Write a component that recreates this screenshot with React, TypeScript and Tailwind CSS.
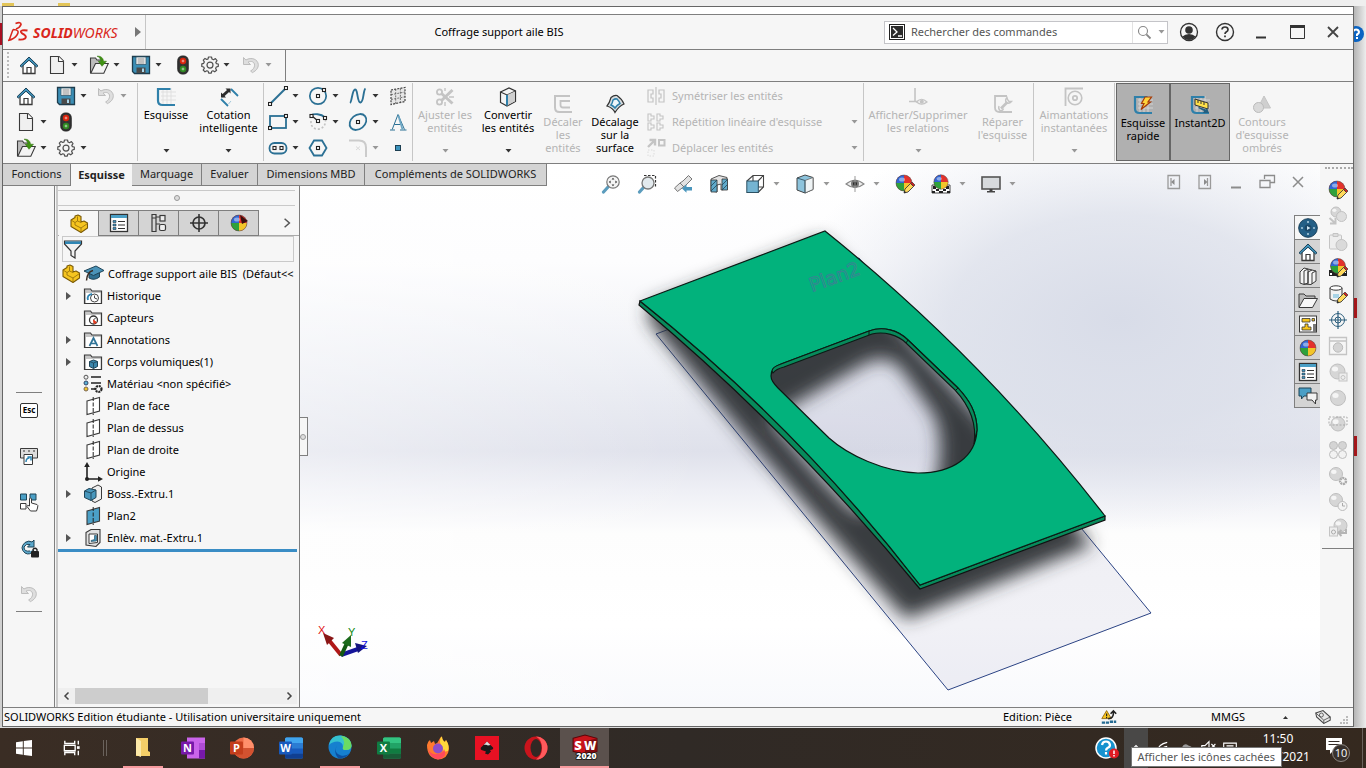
import { ReactNode } from "react";

type G = { children?: ReactNode; s?: number; v?: string };

/* ---------- drawing helpers ---------- */
function Svg({ children, s = 20, v = "0 0 20 20" }: G) {
  return (
    <svg width={s} height={s} viewBox={v} fill="none" aria-hidden="true" className="shrink-0">
      {children}
    </svg>
  );
}

const INK = "#3a3a3a";
const BLUE = "#2b7094";
const PALE = "#c4c4c4";

function Caret({ off = false }: { off?: boolean }) {
  return (
    <svg width="7" height="4" viewBox="0 0 7 4" aria-hidden="true" className="shrink-0">
      <path d="M0.5 0H6.5L3.5 3.6z" fill={off ? "#979797" : "#333"} />
    </svg>
  );
}

const Home = () => (
  <Svg>
    <path d="M4 9V18.5H16V9L10 4z" fill="#fff" stroke={INK} strokeWidth="1.3" />
    <path d="M8 18.5V12.5H12V18.5" stroke={INK} strokeWidth="1.2" />
    <path d="M1 10.8L10 2L19 10.8L17.6 12L10 5.2L2.4 12z" fill="#3f93bb" stroke="#1d4258" strokeWidth="1" />
  </Svg>
);
const Doc = () => (
  <Svg>
    <path d="M3.5 1.5H12L16.5 6V18.5H3.5z" fill="#f0f0f0" stroke={INK} strokeWidth="1.1" />
    <path d="M11.5 1.5V6.5H16.5" fill="#fff" stroke={INK} strokeWidth="1.1" />
  </Svg>
);
const Open = () => (
  <Svg>
    <path d="M1.5 18V3H6.5L8 5H13.5V9" fill="#bcbcbc" stroke={INK} strokeWidth="1.1" />
    <path d="M1.8 18.3L6.5 8.5H19.3L14.8 18.3z" fill="#f4f4f4" stroke={INK} strokeWidth="1.1" />
    <path d="M8 1.2C12 .8 14.4 3 14.4 6.2H17.5L13 11.3L9.3 6.2H11.8C11.8 3.6 10.5 2.2 8 1.2z" fill="#3f9212" stroke="#2f6f0c" strokeWidth=".5" />
  </Svg>
);
const Save = () => (
  <Svg>
    <path d="M1.5 1.5H18.5V18.5H3.5L1.5 16.5z" fill="#3b8eb5" stroke="#1f3c4c" strokeWidth="1.3" />
    <path d="M5 2H15V9.5H5z" fill="#fff" stroke="#33586b" strokeWidth=".8" />
    <path d="M6.5 4H13.5M6.5 6H13.5M6.5 8H13.5" stroke="#777" strokeWidth=".9" />
    <path d="M5.5 12.5H14.5V18H5.5z" fill="#4a4a4a" />
    <path d="M11 13.5H13V17H11z" fill="#a9d7ec" />
  </Svg>
);
const Light = () => (
  <Svg>
    <rect x="4.8" y="1" width="10.4" height="18" rx="4.5" fill="#333" stroke="#222" />
    <circle cx="10" cy="6" r="3.2" fill="#d9240c" />
    <circle cx="10" cy="14" r="3.2" fill="#2f8a22" />
    <path d="M10 4.6V7.4M8.6 6H11.4M10 12.6V15.4M8.6 14H11.4" stroke="#fff" strokeOpacity=".7" strokeWidth=".8" />
  </Svg>
);
const Gear = () => (
  <Svg>
    <path
      d="M8.5 2H11.5L12 4L13.6 4.7L15.4 3.6L17 5.6L15.8 7.3L16.4 8.7L18.3 9V11.4L16.3 12L15.6 13.4L16.6 15.2L14.7 16.8L13 15.8L11.7 16.3L11.3 18.2H8.7L8.2 16.3L6.8 15.8L5 16.8L3.2 15L4.3 13.3L3.7 12L1.8 11.5V8.8L3.7 8.3L4.3 6.9L3.3 5.2L5 3.4L6.8 4.5L8 4z"
      fill="#f5f5f5" stroke="#505050" strokeWidth="1.2" strokeLinejoin="round"
    />
    <circle cx="10" cy="10.1" r="3" stroke="#505050" strokeWidth="1.2" />
  </Svg>
);
const Undo = () => (
  <Svg>
    <path d="M2.5 2.5V9.5H9.5L7 7.2C10.5 5.4 13.5 7 13.6 10.2C13.6 12.6 12 14.6 9.6 16L11.4 17.6C15.2 15.8 17.4 13 17.3 9.6C17 4.4 10.5 1.6 4.9 5z" fill="#dedede" stroke="#bdbdbd" strokeWidth="1" />
  </Svg>
);

const SketchI = ({ children }: { children?: ReactNode }) => (
  <Svg>
    <path d="M5 5H20M5 9H20M5 13H20M7 1V17M11 1V17M15 1V17" stroke="#dcdcdc" strokeWidth=".8" />
    <path d="M14.5 2H2V13.5Q2 18 6.5 18H19" stroke="#2f80aa" strokeWidth="2.2" />
    {children}
  </Svg>
);
const Dim = () => (
  <Svg>
    <path d="M12 2L19 9M2 12L9 19" stroke="#2f80aa" strokeWidth="1.8" />
    <path d="M3.5 10.5L12 2.5M9.5 17L12 14" stroke="#8cbbd2" strokeWidth=".8" />
    <path d="M2 10.5V5.5L3.6 7L8 3L6.500 1.500H11.500V6.500L10 5L5.600 9L7 10.500z" fill="#2c2c2c" />
  </Svg>
);
const Node = ({ x, y }: { x: number; y: number }) => (
  <rect x={x - 1.5} y={y - 1.5} width="3" height="3" fill="#fff" stroke="#222" strokeWidth="1.1" />
);
const LineI = () => (<Svg><path d="M2 18L18 2" stroke={BLUE} strokeWidth="2" /><Node x={2} y={18} /><Node x={18} y={2} /></Svg>);
const CircleI = () => (<Svg><circle cx="10" cy="10" r="8.2" stroke={BLUE} strokeWidth="1.7" /><Node x={10} y={10} /><Node x={16} y={4} /></Svg>);
const SplineI = () => (<Svg><path d="M2 17C4 16 4 4 7 3.5C10 3 9 17 12.5 16.5C16 16 15 4 17.5 2.5" stroke={BLUE} strokeWidth="1.9" /></Svg>);
const PlaneGrid = () => (
  <Svg>
    <path d="M3 4L17 1.5V15.5L3 18.5z" fill="#e6e6e6" stroke="#444" strokeWidth="1.2" strokeDasharray="2 1.2" />
    <path d="M7.7 3V18M12.4 2.4V16.8M3 8.7L17 6M3 13.5L17 10.8" stroke="#555" strokeWidth=".8" strokeDasharray="2 1.2" />
  </Svg>
);
const RectI = () => (<Svg><rect x="2" y="4" width="16" height="12" stroke={BLUE} strokeWidth="1.8" /><Node x={2} y={16} /><Node x={18} y={4} /></Svg>);
const ArcI = () => (
  <Svg>
    <path d="M2.5 3.5C6 1.5 13 1.5 17 5.5" stroke={BLUE} strokeWidth="1.8" />
    <path d="M3 9C2 20 18 20 17.5 8" stroke="#c2c2c2" strokeWidth="1.6" strokeDasharray="2 2" />
    <path d="M4 4L10 9" stroke="#222" strokeWidth="1.2" /><Node x={3.5} y={4} /><Node x={10} y={9} /><Node x={17} y={6} />
  </Svg>
);
const EllipseI = () => (<Svg><ellipse cx="10" cy="10" rx="9.2" ry="7" transform="rotate(-40 10 10)" stroke={BLUE} strokeWidth="1.8" /><Node x={10} y={10} /></Svg>);
const LetterA = () => (
  <Svg>
    <path d="M2 18H7M12 18H18.5M4.2 17.5L10 2.5L16.5 17.5M6.3 12.5H12.5" stroke={BLUE} strokeWidth="1" />
    <path d="M10.4 3.5L14.500 17.5" stroke="#6da7c4" strokeWidth="1.8" />
  </Svg>
);
const SlotI = () => (<Svg><rect x="1.5" y="5" width="17" height="10.5" rx="5" stroke={BLUE} strokeWidth="1.8" /><Node x={6.5} y={10} /><Node x={13.5} y={10} /></Svg>);
const HexI = () => (<Svg><path d="M6 2.5H14L18.5 10L14 17.5H6L1.5 10z" stroke={BLUE} strokeWidth="1.8" /><Node x={10} y={10} /></Svg>);
const FilletI = () => (<Svg><path d="M1 2.5H11Q18 2.5 18 9.5V19" stroke="#cbcbcb" strokeWidth="2" /><path d="M8 8.5L12 12M12 8.5L8 12" stroke="#dadada" /></Svg>);
const PointI = () => (<Svg><rect x="7.5" y="7.5" width="5" height="5" fill="#3b93bd" stroke="#1d3f52" /></Svg>);

const Trim = () => (
  <Svg>
    <circle cx="4.500" cy="5" r="2.6" stroke={PALE} strokeWidth="1.8" /><circle cx="4.500" cy="15" r="2.6" stroke={PALE} strokeWidth="1.8" />
    <path d="M6.500 6.5L17.500 16.500M6.500 13.5L17.500 3" stroke={PALE} strokeWidth="3" /><path d="M10 1V4M10 15V19M14 10H19" stroke={PALE} strokeWidth="1.4" />
  </Svg>
);
const Cube = () => (
  <Svg>
    <path d="M2.5 5L11 1L17.5 4V14.5L9 19L2.5 15.5z" fill="#f4f4f4" stroke="#333" strokeWidth="1.2" />
    <path d="M2.5 5L9 8L17.5 4" stroke="#333" strokeWidth="1.1" /><path d="M9 8L17 4.4V14.3L9 18.4z" fill="#cfcfcf" />
    <path d="M9 8V18.5" stroke="#2f80aa" strokeWidth="2" />
  </Svg>
);
const OffsetI = () => (<Svg><path d="M17 2H2V13.5Q2 18 6.5 18H19" stroke={PALE} strokeWidth="2" /><path d="M17 7H7.5V11Q7.5 13.5 10 13.5H17" stroke={PALE} strokeWidth="1.8" /></Svg>);
const SurfI = () => (
  <Svg>
    <path d="M6 3.5Q9 1 12 1.5Q17 5 19 10Q14 12 10 18.5Q8 14 2 12Q4.5 9 6 3.5z" fill="#d7dde0" stroke="#333" strokeWidth="1.2" />
    <path d="M8 6Q10 4.5 12 5Q14 7 15 9.5Q12 11 10 14Q8.5 12 6 11Q7.5 9 8 6z" fill="#eef6fa" stroke="#2f80aa" strokeWidth="1.5" />
  </Svg>
);
const Mirror = () => (<Svg><path d="M10 1V19" stroke={PALE} strokeWidth="1.2" /><path d="M2 4H7V8H5V12H7V16H2zM18 4H13V8H15V12H13V16H18z" stroke={PALE} strokeWidth="1.2" /></Svg>);
const Pattern = () => (
  <Svg>
    {[[2, 2], [11, 2], [2, 11], [11, 11]].map(([x, y]) => (
      <path key={`${x}-${y}`} d={`M${x} ${y}H${x + 3}V${y + 2}H${x + 6}V${y + 5}H${x + 3}V${y + 7}H${x}z`} stroke={PALE} strokeWidth="1.1" />
    ))}
  </Svg>
);
const MoveI = () => (
  <Svg>
    <path d="M2 9L8 3M3.5 2H9V7.5" stroke={PALE} strokeWidth="2.4" /><rect x="13" y="2" width="5.5" height="5.5" stroke={PALE} strokeWidth="2" />
    <rect x="2" y="12" width="6" height="6" stroke="#dcdcdc" strokeDasharray="1.5 1.5" />
  </Svg>
);
const RelI = () => (
  <Svg>
    <path d="M7 1V14M1 14.5H13" stroke={PALE} strokeWidth="1.6" />
    <path d="M8.5 15Q13.5 9.5 19 15Q13.5 19.5 8.5 15z" fill="#f1f1f1" stroke={PALE} strokeWidth="1.2" /><circle cx="13.8" cy="14.7" r="2" fill={PALE} />
  </Svg>
);
const RepairI = () => (
  <Svg>
    <path d="M14 2H2V13.5Q2 18 6.5 18H19" stroke={PALE} strokeWidth="1.8" />
    <path d="M8 14.500L14.500 8" stroke={PALE} strokeWidth="2.600" /><path d="M14 3.500Q11.500 6 13.500 9Q16.500 10 18.500 7.500L16 7.500L14.500 5.5zM6 12Q5 15 7 16.500Q10 17 10.500 14.500" stroke={PALE} strokeWidth="1.4" />
  </Svg>
);
const SnapI = () => (<Svg><path d="M1.5 19V1.5H19" stroke={PALE} strokeWidth="1.8" /><circle cx="11" cy="11" r="6.8" stroke={PALE} strokeWidth="1.6" /><circle cx="11" cy="11" r="2.2" stroke={PALE} strokeWidth="1.8" /></Svg>);
const Rapid = () => (<SketchI><path d="M12 2H18.5L15 7H17.5L8 14.5L11 8.5H8.5z" fill="#ffd43b" stroke="#a53a08" strokeWidth="1.2" /></SketchI>);
const Instant = () => (
  <SketchI>
    <path d="M5 4L18 8V14L5 10z" fill="#ffe14a" stroke="#333" /><path d="M8 5V8M11 6V9M14 7V10" stroke="#333" />
    <path d="M8 13L14 16L13 18H19L17 13L16 14.5L9 12z" fill="#235f80" />
  </SketchI>
);
const Shaded = () => (<Svg><path d="M12 2L18.5 14H6z" fill="#cfcfcf" stroke={PALE} /><circle cx="6.5" cy="13.5" r="5" fill="#d9d9d9" stroke="#bbb" /></Svg>);

/* four-colour appearance ball */
const Ball = ({ children, r = 8, cx = 9, cy = 9 }: { children?: ReactNode; r?: number; cx?: number; cy?: number }) => (
  <Svg>
    <circle cx={cx} cy={cy} r={r} fill="#e3322c" />
    <path d={`M${cx} ${cy}V${cy - r}A${r} ${r} 0 0 0 ${cx - r} ${cy}z`} fill="#3166d4" />
    <path d={`M${cx} ${cy}H${cx - r}A${r} ${r} 0 0 0 ${cx} ${cy + r}z`} fill="#2fa13c" />
    <path d={`M${cx} ${cy}V${cy + r}A${r} ${r} 0 0 0 ${cx + r} ${cy}z`} fill="#f2c52a" />
    <circle cx={cx} cy={cy} r={r} stroke="#444" strokeOpacity=".6" strokeWidth=".8" />
    <ellipse cx={cx - 2} cy={cy - 3.5} rx="3" ry="2" fill="#fff" fillOpacity=".45" />
    {children}
  </Svg>
);
const Pencil = () => (
  <>
    <path d="M9 19L10 15L15.5 9.5L18.5 12.5L13 18z" fill="#ffd95a" stroke="#3b3b3b" strokeWidth=".9" />
    <path d="M15.5 9.5L17 8L20 11L18.5 12.5z" fill="#c22" stroke="#3b3b3b" strokeWidth=".7" /><path d="M9 19L9.6 16.8L11.2 18.4z" fill="#222" />
  </>
);
const Checker = () => (
  <><path d="M1 11H19V19H1z" fill="#fff" stroke="#222" strokeWidth=".8" /><path d="M2 12H5V15H2zM15 12H18V15H15zM5 15H8V17H5zM12 15H15V17H12zM1 17H4V19H1zM8 17H12V19H8zM16 17H19V19H16z" fill="#222" /></>
);
const Ghost = ({ children, r = 7.5, cx = 9.5, cy = 9.5 }: { children?: ReactNode; r?: number; cx?: number; cy?: number }) => (
  <Svg>
    <circle cx={cx} cy={cy} r={r} fill="#d6d6d6" stroke="#bfbfbf" />
    <ellipse cx={cx - r / 3} cy={cy - r / 3} rx={r / 2.4} ry={r / 3} fill="#f5f5f5" />
    {children}
  </Svg>
);

/* heads-up view tools */
const ZoomFit = () => (
  <Svg><path d="M2.5 18L7.5 12.5" stroke="#5b9cbd" strokeWidth="3.2" strokeLinecap="round" /><circle cx="12" cy="8" r="6.2" fill="#f4f4f4" stroke="#777" strokeWidth="1.2" />
    <path d="M12 3.8L13.4 5.6H10.600zM12 12.2L13.400 10.400H10.600zM7.800 8L9.600 6.600V9.400zM16.200 8L14.400 6.600V9.400z" fill="#333" /></Svg>
);
const ZoomArea = () => (
  <Svg><path d="M7 1.5H18.5V13" stroke="#333" strokeWidth="1.2" strokeDasharray="2.5 1.5" /><path d="M2.5 18L6.5 13.5" stroke="#5b9cbd" strokeWidth="3.2" strokeLinecap="round" /><circle cx="11" cy="9" r="6" fill="#e3eaee" stroke="#777" strokeWidth="1.3" /></Svg>
);
const Prev = () => (
  <Svg><path d="M1.5 14L7 9L10 7L15.500 1.500L19 5L13 11L4.500 17.5z" fill="#e2e2e2" stroke="#777" /><path d="M7 9L11 13" stroke="#777" /><path d="M9 14.5L13.5 10.5V13H19V16.5H13.5V18.8z" fill="#4a96bd" /></Svg>
);
const Section = () => (
  <Svg><path d="M2 5L10 1.5L18 3.5V15L12 16V10L8 11V18L2 17z" fill="#e2e2e2" stroke="#555" /><path d="M2 6H8V18H2zM13 5H18.5V16H13z" fill="#60aacb" stroke="#333" strokeWidth=".8" /><path d="M2 12L8 6M2 17L8 11M13 11L18 6M13 16L18 11" stroke="#245" strokeWidth=".8" /></Svg>
);
const ViewCube = () => (
  <Svg><path d="M2 7L8 1.5H18.5V13L13 18.5M18.5 1.5L13 7M8 1.5V13H18.5M13 7V13" stroke="#444" strokeWidth="1.1" /><rect x="1.8" y="7" width="11.5" height="11.5" fill="#74b4d2" stroke="#2c5163" /></Svg>
);
const Display = () => (
  <Svg><path d="M2 4L10 1L18 3.5V15.5L10 19L2 16z" fill="#8cc3dc" stroke="#444" /><path d="M10 6.5L18 3.5V15.5L10 19z" fill="#eef3f5" stroke="#666" strokeWidth=".8" /><path d="M2 4L10 6.5V19" stroke="#356" strokeWidth=".9" /></Svg>
);
const Eye = () => (
  <Svg><path d="M1 10Q10 2.5 19 10Q10 17 1 10z" fill="#eee" stroke="#888" strokeWidth="1.1" /><circle cx="10" cy="9.8" r="4" fill="#777" /><circle cx="10" cy="9.8" r="2" fill="#222" /><path d="M10 2V18" stroke="#999" /></Svg>
);
const Monitor = () => (<Svg><rect x="1" y="3" width="18" height="12" fill="#d7dadd" stroke="#555" strokeWidth="1.6" /><path d="M8.5 15H11.5V17H14V18.5H6V17H8.5z" fill="#444" /></Svg>);

/* tree and panels */
const Part = () => (
  <Svg>
    <path d="M2 6L6 3.5V2L9 1L12 2.5V8L15 7L18.5 9V14L12 18.5L2 12.5z" fill="#f6c51f" stroke="#7a5a06" strokeWidth="1.1" strokeLinejoin="round" />
    <path d="M2 6L6 8.5V11L12 14L18.5 9.5M12 14V18.5M6 8.5L8.5 7V2.5M8.5 7L12 8.5" stroke="#9b750c" strokeWidth=".9" />
  </Svg>
);
const Cap = () => (
  <Svg><path d="M5 9V14Q10 17 15.5 13V9z" fill="#2f6f90" stroke="#1f4457" /><path d="M0 7L12 2L20 6.5L9.5 11.5z" fill="#4b93b8" stroke="#1f4457" /><path d="M9 6.5Q3 8 2.5 16.5" stroke="#3b2b22" strokeWidth="1.5" /></Svg>
);
const PropI = () => (
  <Svg><rect x="1.5" y="1.5" width="17" height="17" fill="#fff" stroke="#333" strokeWidth="1.3" /><path d="M2 2H18V5H2z" fill="#4a9fc6" />
    <path d="M4 7.5H7V9.5H4zM4 11H7V13H4zM4 14.5H7V16.5H4z" fill="#3f93bb" stroke="#234" strokeWidth=".6" /><path d="M9 8.5H16M9 12H16M9 15.5H16" stroke="#333" strokeWidth="1.1" /></Svg>
);
const ConfI = () => (<Svg><path d="M3 1.5H7V5H3zM3 5V18.500H7V13M7 5V13M7 11H11M7 4H11" stroke={INK} strokeWidth="1.2" /><rect x="11" y="2.500" width="5" height="5.5" fill="#eee" stroke={INK} strokeWidth="1.2" /><rect x="10.5" y="11.500" width="6" height="6" rx="1.5" fill="#eee" stroke={INK} strokeWidth="1.2" /></Svg>);
const TargetI = () => (<Svg><circle cx="10" cy="10" r="6" stroke="#333" strokeWidth="1.7" /><path d="M10 1V19M1 10H19" stroke="#333" strokeWidth="1.6" /></Svg>);
const Funnel = () => (<Svg><path d="M1.5 2H18.5V5L12 12V19L8 16.5V12L1.5 5z" fill="#f1f1f1" stroke="#333" strokeWidth="1.2" /><path d="M2 2.4H18V5H2z" fill="#2f86b4" /></Svg>);
const FolderBox = ({ children }: { children?: ReactNode }) => (
  <Svg><path d="M1.5 17.5V3H7.5L9 5H18.5V17.5z" fill="#c6c6c6" stroke={INK} strokeWidth="1.2" /><path d="M3 7H17.5V17H3z" fill="#fff" />{children}</Svg>
);
const History = () => (<FolderBox><circle cx="11.5" cy="12" r="4" stroke="#444" fill="#fff" /><path d="M11.5 9.5V12L14 13" stroke="#444" /><path d="M5 14Q3.5 9 9 8" stroke="#2f86b4" strokeWidth="1.8" /></FolderBox>);
const Sensor = () => (<FolderBox><circle cx="10.5" cy="12" r="4" stroke="#333" fill="#fff" strokeWidth="1.3" /><path d="M10.5 12L13 9.5" stroke="#333" /><path d="M10.5 12L13.5 14.5L11 15.5z" fill="#e03a1e" stroke="#e03a1e" /></FolderBox>);
const Annot = () => (<FolderBox><path d="M6.5 16L10.5 8L14.5 16M8 13.5H13" stroke="#2f7397" strokeWidth="1.7" /></FolderBox>);
const Bodies = () => (<FolderBox><path d="M6.5 9.5L10.5 8L14.5 9.5V14.5L10.5 16.5L6.5 14.5z" fill="#3b86ab" stroke="#1f4457" /><path d="M6.5 9.5L10.5 11V16.5M10.5 11L14.5 9.5" stroke="#1f4457" strokeWidth=".8" /></FolderBox>);
const Material = () => (
  <Svg><path d="M8 3H18M8 9H18M8 15H13" stroke="#222" strokeWidth="1.6" /><circle cx="3" cy="3.2" r="2" fill="#eee" stroke="#555" /><circle cx="3" cy="9" r="2" fill="#5ab0d6" stroke="#346" /><circle cx="3" cy="15" r="2" fill="#f2c52a" stroke="#765" /><circle cx="15.5" cy="15" r="3" stroke="#222" strokeWidth="2.2" strokeDasharray="2 .8" /></Svg>
);
const PlaneI = ({ fill = "#fff" }: { fill?: string }) => (<Svg><path d="M4 5L16.5 1.5V15L4 18.5z" fill={fill} stroke={INK} strokeWidth="1.1" /><path d="M10.2 1V19" stroke="#222" strokeDasharray="4 1.5" /></Svg>);
const Origin = () => (<Svg><path d="M4 17V3M3 17H17" stroke="#222" strokeWidth="1.6" /><path d="M4 0L6.8 5H1.2zM20 17L15 14.2V19.8z" fill="#222" /><circle cx="4" cy="17" r="2" fill="#222" /></Svg>);
const Boss = () => (<Svg><path d="M9 4L15 1L18.5 3V15L12 18.5L9 17z" fill="#eee" stroke={INK} /><path d="M1.5 7L6 4.5L13 6V13.5L8 16.5L1.5 13.5z" fill="#4797bd" stroke="#1f4457" /><path d="M1.5 7L8 9V16.5M8 9L13 6" stroke="#1f4457" strokeWidth=".9" /></Svg>);
const CutI = () => (<Svg><path d="M3 4.5L8 1.5H17V14.5L13 18.5L3 17z" fill="#e2e2e2" stroke={INK} strokeWidth="1.1" /><path d="M6 6H14.500V14.500L6 15.5z" fill="#fff" stroke={INK} /><path d="M8 13.500V12.500L11.500 11.500V7.500H13.500V13z" fill="#3f93bb" stroke="#1f4457" strokeWidth=".6" /></Svg>);

/* ---------- reusable controls ---------- */
function Tool({ label, children, cls = "w-7", caret, off, cc = "w-3" }: { label: string; children: ReactNode; cls?: string; caret?: boolean; off?: boolean; cc?: string }) {
  return (
    <div className="flex items-center">
      <button aria-label={label} className={`flex h-[26px] items-center justify-center ${cls}`}>{children}</button>
      {caret && (
        <button aria-label={`${label}, options`} className={`flex h-[26px] items-center ${cc}`}><Caret off={off} /></button>
      )}
    </div>
  );
}

function Big({ icon, lines, w, off, caret, low, hot }: { icon: ReactNode; lines: string[]; w: string; off?: boolean; caret?: boolean; low?: boolean; hot?: boolean }) {
  return (
    <button className={`flex h-[78px] flex-col items-center ${w} ${low ? "pt-[11px]" : "pt-1"} ${off ? "text-[#b4b4b4]" : "text-black"} ${hot ? "border border-[#666] bg-[#b0b0b0]" : ""}`}>
      {icon}
      <span className="flex flex-col pt-px whitespace-nowrap">
        {lines.map((l) => <span key={l}>{l}</span>)}
      </span>
      {caret && <span className="mt-auto flex pb-2"><Caret off={off} /></span>}
    </button>
  );
}

const Rule = () => <div className="h-[78px] w-px shrink-0 bg-[#c6c6c6]" />;

/* ---------- title bar ---------- */
function TitleBar() {
  return (
    <header className="flex h-[34px] items-center bg-[#f6f6f6]">
      <div className="flex h-full w-[143px] items-center border-r border-[#c6c6c6] pl-1">
        <svg width="22" height="22" viewBox="0 0 22 22" fill="none" className="shrink-0" aria-hidden="true">
          <path d="M8.500 2.500Q14 .500 14 3.500Q13 6.500 9 8" stroke="#d9261c" strokeWidth="1.700" />
          <path d="M6 8.500L2 19.500M6 8.500Q13.500 8.500 10 14Q7.500 18 1 19.500" stroke="#d9261c" strokeWidth="1.500" />
          <path d="M20.500 9.500Q13.500 8.500 14 11Q14.500 12.500 17 13.500Q20 15.500 18 17.500Q16 19 11.500 18.500" stroke="#d9261c" strokeWidth="2" />
        </svg>
        <div className="pl-1 font-['Noto_Sans','Open_Sans',sans-serif] text-[14px] text-[#d9261c] italic"><b>SOLID</b>WORKS</div>
        <button aria-label="Menu" className="ml-auto pr-1">
          <svg width="6" height="10" viewBox="0 0 6 10"><path d="M0 0L6 5L0 10z" fill="#777" /></svg>
        </button>
      </div>
      <h1 className="min-w-0 flex-1 truncate pr-12 pl-4 text-center">Coffrage support aile BIS</h1>
      <div className="flex h-[23px] w-[284px] items-center border border-[#c4c4c8] bg-white">
        <svg width="16" height="16" viewBox="0 0 16 16" className="mx-1 shrink-0" aria-hidden="true">
          <rect x=".5" y=".5" width="15" height="15" fill="#fff" stroke="#222" /><rect x="2" y="2" width="12" height="12" fill="#2c2c2c" /><path d="M4 4L8 8L4 11.500M9 12H13" stroke="#fff" strokeWidth="1.3" fill="none" />
        </svg>
        <input aria-label="Rechercher des commandes" placeholder="Rechercher des commandes" className="min-w-0 flex-1 bg-transparent pl-0.5 placeholder:text-[#555] focus:outline-none" />
        <button aria-label="Rechercher" className="flex h-full w-6 items-center justify-center border-l border-[#e2e2e2]">
          <Svg s={15}><circle cx="8" cy="8" r="6" stroke="#888" strokeWidth="1.5" /><path d="M12.5 12.5L18 18" stroke="#888" strokeWidth="2.4" /></Svg>
        </button>
        <span className="flex w-[11px] justify-center"><Caret off /></span>
      </div>
      <div className="flex shrink-0 items-center">
        <button aria-label="Compte" className="flex w-[42px] justify-center">
          <Svg><circle cx="10" cy="10" r="8.5" stroke="#333" strokeWidth="1.3" /><circle cx="10" cy="8" r="3.8" fill="#333" /><path d="M3.5 14.5Q6 12 10 12T16.5 14.5Q14 18 10 18T3.5 14.5z" fill="#333" /></Svg>
        </button>
        <button aria-label="Aide" className="flex w-[30px] justify-center">
          <Svg><circle cx="10" cy="10" r="8.5" stroke="#333" strokeWidth="1.4" /><path d="M7 7.5Q7.2 5 10 5T13 7.5Q13 9 11.5 9.8Q10 10.6 10 12M10 13.5V15.2" stroke="#333" strokeWidth="1.7" /></Svg>
        </button>
        <button aria-label="Réduire" className="flex w-[42px] justify-center"><Svg><path d="M5 15.5H15" stroke="#333" strokeWidth="2" /></Svg></button>
        <button aria-label="Agrandir" className="flex w-[31px] justify-center"><Svg><path d="M2.500 3.500H16.500V16.500H2.500z" stroke="#333" /><path d="M2 4.5H17" stroke="#333" strokeWidth="3" /></Svg></button>
        <button aria-label="Fermer" className="flex w-10 justify-center"><Svg><path d="M5 5L15 15M15 5L5 15" stroke="#444" strokeWidth="1.8" /></Svg></button>
      </div>
    </header>
  );
}

function QuickBar() {
  return (
    <div className="flex h-8 border-t border-[#7f7f7f] bg-[#f6f6f6]">
      <div className="flex items-center border-r border-[#7f7f7f] pr-1.5 pb-px">
        <div className="mr-1.5 ml-1 h-[26px] w-px border-l-2 border-dotted border-[#bbb]" />
        <Tool label="Accueil"><Home /></Tool>
        <Tool label="Nouveau" caret cc="w-3.5"><Doc /></Tool>
        <Tool label="Ouvrir" caret cc="w-3.5"><Open /></Tool>
        <Tool label="Enregistrer" caret cc="w-3.5"><Save /></Tool>
        <Tool label="Reconstruire"><Light /></Tool>
        <Tool label="Options" cls="w-[26px]" caret cc="w-3.5"><Gear /></Tool>
        <Tool label="Annuler" caret off cc="w-3.5"><Undo /></Tool>
      </div>
    </div>
  );
}

function Ribbon() {
  return (
    <div className="flex h-[83px] items-start border-y border-[#7f7f7f] bg-[#f6f6f6] pt-px leading-[13px]">
      <div className="grid w-[134px] shrink-0 grid-cols-[40px_40px_40px] pl-[9px]">
        <Tool label="Accueil"><Home /></Tool><Tool label="Enregistrer" caret><Save /></Tool><Tool label="Annuler" caret off><Undo /></Tool>
        <Tool label="Nouveau" caret><Doc /></Tool><Tool label="Reconstruire"><Light /></Tool><span />
        <Tool label="Ouvrir" caret><Open /></Tool><Tool label="Options" caret><Gear /></Tool>
      </div>
      <Rule />
      <Big icon={<SketchI />} lines={["Esquisse"]} w="w-14" caret />
      <Big icon={<Dim />} lines={["Cotation", "intelligente"]} w="w-[69px]" caret />
      <Rule />
      <div className="grid w-[148px] shrink-0 grid-cols-[40px_40px_40px_28px]">
        <Tool label="Ligne" caret><LineI /></Tool><Tool label="Cercle" caret><CircleI /></Tool><Tool label="Spline" caret><SplineI /></Tool><Tool label="Plan"><PlaneGrid /></Tool>
        <Tool label="Rectangle" caret><RectI /></Tool><Tool label="Arc" caret><ArcI /></Tool><Tool label="Ellipse" caret><EllipseI /></Tool><Tool label="Texte"><LetterA /></Tool>
        <Tool label="Rainure" caret><SlotI /></Tool><Tool label="Polygone"><HexI /></Tool><Tool label="Congé" caret off><FilletI /></Tool><Tool label="Point"><PointI /></Tool>
      </div>
      <Rule />
      <Big icon={<Trim />} lines={["Ajuster les", "entités"]} w="w-16" off caret />
      <Big icon={<Cube />} lines={["Convertir", "les entités"]} w="w-[62px]" caret />
      <Big icon={<OffsetI />} lines={["Décaler", "les", "entités"]} w="w-12" off low />
      <Big icon={<SurfI />} lines={["Décalage", "sur la", "surface"]} w="w-14" low />
      <div className="flex w-[220px] shrink-0 flex-col text-[#b4b4b4]">
        {[
          { t: "Symétriser les entités", i: <Mirror />, c: false },
          { t: "Répétition linéaire d'esquisse", i: <Pattern />, c: true },
          { t: "Déplacer les entités", i: <MoveI />, c: true },
        ].map((r) => (
          <button key={r.t} className="flex h-[26px] items-center pr-[5px] pl-[3px]">
            {r.i}<span className="pb-px pl-1.5">{r.t}</span>{r.c && <span className="ml-auto"><Caret off /></span>}
          </button>
        ))}
      </div>
      <Rule />
      <Big icon={<RelI />} lines={["Afficher/Supprimer", "les relations"]} w="w-[108px]" off caret />
      <Big icon={<RepairI />} lines={["Réparer", "l'esquisse"]} w="w-[61px]" off low />
      <Rule />
      <Big icon={<SnapI />} lines={["Aimantations", "instantanées"]} w="w-20" off caret />
      <Rule />
      <div className="flex pl-px">
        <Big icon={<Rapid />} lines={["Esquisse", "rapide"]} w="w-[54px]" low hot />
        <Big icon={<Instant />} lines={["Instant2D"]} w="w-[60px]" low hot />
      </div>
      <Big icon={<Shaded />} lines={["Contours", "d'esquisse", "ombrés"]} w="w-16" off low />
    </div>
  );
}

function Tabs() {
  const tabs = [
    ["Fonctions", "w-[68px]"], ["Esquisse", "w-[61px]"], ["Marquage", "w-[70px]"],
    ["Evaluer", "w-[56px]"], ["Dimensions MBD", "w-[107px]"], ["Compléments de SOLIDWORKS", "w-[182px]"],
  ];
  return (
    <nav className="absolute top-0 left-0 z-10 flex">
      {tabs.map(([t, w], i) => (
        <button key={t} className={`h-[22px] whitespace-nowrap text-[#222] ${w} ${i === 1 ? "bg-[#f6f6f6] font-bold" : "border-r border-b border-[#7f7f7f] bg-[#d4d4d4]"}`}>{t}</button>
      ))}
    </nav>
  );
}

/* ---------- left side ---------- */
function SideKeys() {
  return (
    <aside className="flex w-[52px] shrink-0 flex-col items-center border-r border-[#7f7f7f] bg-[#f6f6f6] pt-[228px] pl-px">
      <div className="h-px w-[26px] bg-[#7f7f7f]" />
      <div className="flex flex-col items-center gap-[26px] py-[7px]">
        <button className="flex h-5 w-5 items-center justify-center"><span className="flex h-[15px] w-[18px] items-center justify-center rounded-[2px] border border-[#333] bg-white text-[8px] font-bold">Esc</span></button>
        <button aria-label="Raccourcis"><Svg><path d="M1.5 2.5H18.5V12H1.5z" fill="#ddd" stroke={INK} /><path d="M4 5H6M9 5H11M14 5H16" stroke="#888" strokeWidth="2" /><path d="M5 8.5H13.5V18.5H5z" fill="#fff" stroke={INK} /><path d="M7 16Q7 12 10.5 12M8.5 11H12V14.5" stroke="#2f86b4" strokeWidth="1.5" /></Svg></button>
        <button aria-label="Sélection"><Svg><path d="M1.5 2H7.5V8H1.5zM11 2H17V8H11z" fill="#4a9fc6" stroke="#1f4457" /><path d="M1.5 11.5H7V17H1.5z" fill="#fff" stroke={INK} /><path d="M10.5 6.5Q12 5 12.5 7V11L18 12.5Q19.5 13 18.5 16L17.5 19H11.5L8 14.5Q8 12.5 10.5 14z" fill="#fff" stroke={INK} /></Svg></button>
        <button aria-label="Verrouiller"><Svg><path d="M15 12Q11 18 6 15Q0 10 6 4.5Q10 2 13 4L15 2V9H8.5L11 6.5Q7 5 5 9Q5 14 11 13" fill="#5ba8cc" stroke="#1f4457" /><rect x="12" y="13" width="8" height="6.5" rx="1" fill="#222" /><path d="M14 13V11.5Q16 9 18 11.5V13" stroke="#222" strokeWidth="1.3" /></Svg></button>
        <button aria-label="Annuler"><Undo /></button>
      </div>
      <div className="h-px w-[26px] bg-[#7f7f7f]" />
    </aside>
  );
}

function Tree() {
  const rows: { t: string; i: ReactNode; a?: boolean }[] = [
    { t: "Historique", i: <History />, a: true }, { t: "Capteurs", i: <Sensor /> },
    { t: "Annotations", i: <Annot />, a: true }, { t: "Corps volumiques(1)", i: <Bodies />, a: true },
    { t: "Matériau <non spécifié>", i: <Material /> }, { t: "Plan de face", i: <PlaneI /> },
    { t: "Plan de dessus", i: <PlaneI /> }, { t: "Plan de droite", i: <PlaneI /> },
    { t: "Origine", i: <Origin /> }, { t: "Boss.-Extru.1", i: <Boss />, a: true },
    { t: "Plan2", i: <PlaneI fill="#4ba0c7" /> }, { t: "Enlèv. mat.-Extru.1", i: <CutI />, a: true },
  ];
  const tabs = [<Part />, <PropI />, <ConfI />, <TargetI />, <Ball cx={10} cy={10}><path d="M11 2L19 8L13 11z" fill="#3a1010" /></Ball>];
  return (
    <section className="flex w-[243px] shrink-0 flex-col border-l-2 border-[#c9c9c9] bg-[#f6f6f6] pt-[22px]">
      <div className="mt-1 mr-1 flex h-4 items-center justify-center border-y border-[#c9c9c9]">
        <span className="h-1.5 w-1.5 rounded-full border border-[#999] bg-[#ddd]" />
      </div>
      <div className="mt-1 flex h-[26px] border-b border-[#aaa] pl-px">
        {tabs.map((t, i) => (
          <button key={i} aria-label={`Onglet ${i + 1}`} className={`flex h-[26px] w-10 items-center justify-center border-t border-r border-[#7f7f7f] ${i ? "border-b bg-[#d4d4d4]" : "bg-[#f6f6f6]"}`}>{t}</button>
        ))}
        <button aria-label="Suite" className="ml-auto pr-1.5"><Svg s={12}><path d="M6 3L14 10L6 17" stroke="#555" strokeWidth="2.5" /></Svg></button>
      </div>
      <label className="mr-[5px] ml-1 flex h-[26px] items-center border border-[#c9c9c9]">
        <Funnel /><input aria-label="Filtre" className="min-w-0 flex-1 bg-transparent px-1 focus:outline-none" />
      </label>
      <div className="mt-px flex h-[22px] items-center pl-[3px] whitespace-nowrap">
        <Part /><span className="w-[3px] shrink-0" /><Cap /><span className="pl-1 whitespace-pre">Coffrage support aile BIS  (Défaut&lt;&lt;</span>
      </div>
      <ul>
        {rows.map((r) => (
          <li key={r.t} className="flex h-[22px] items-center whitespace-nowrap">
            <span className="flex w-[25px] pl-2">{r.a && <svg width="5" height="8" viewBox="0 0 5 8"><path d="M0 0L5 4L0 8z" fill="#555" /></svg>}</span>
            {r.i}<span className="pl-1">{r.t}</span>
          </li>
        ))}
      </ul>
      <div className="mr-0.5 h-[3px] bg-[#3a8dc5]" />
      <div className="mt-auto mr-0.5 mb-[3px] flex h-4 items-center bg-[#efefef]">
        <button aria-label="Gauche" className="flex w-[17px] justify-center"><Svg s={10}><path d="M13 3L6 10L13 17" stroke="#444" strokeWidth="3" /></Svg></button>
        <div className="flex h-4 flex-1"><div className="w-[65%] bg-[#cdcdcd]" /></div>
        <button aria-label="Droite" className="flex w-[17px] justify-center"><Svg s={10}><path d="M7 3L14 10L7 17" stroke="#444" strokeWidth="3" /></Svg></button>
      </div>
    </section>
  );
}

/* ---------- 3D view ---------- */
const HOLE = "M771 376C771 370 774 367 781 364L869 331C883 326 898 330 908 340L958 388C969 400 977 412 977 430C976 456 954 473 918 473C884 472 848 455 829 438L778 388C773 383 771 380 771 376z";

function Scene() {
  return (
    <svg className="block h-full w-full" viewBox="300 164 1020 543" preserveAspectRatio="xMidYMid slice" aria-label="Vue 3D" role="img">
      <defs>
        <linearGradient id="sky" x1="0" y1="0" x2="0" y2="1">
          <stop offset="0" stopColor="#fff" /><stop offset=".18" stopColor="#fdfdfe" /><stop offset=".38" stopColor="#eceef4" /><stop offset=".53" stopColor="#dfe1eb" />
          <stop offset=".6" stopColor="#eeeff5" /><stop offset=".68" stopColor="#fdfdfd" /><stop offset=".85" stopColor="#fff" /><stop offset="1" stopColor="#f8f9fc" />
        </linearGradient>
        <linearGradient id="veil" x1="0" y1="0" x2="1" y2="0">
          <stop offset="0" stopColor="#fff" stopOpacity=".4" /><stop offset=".4" stopColor="#fff" stopOpacity="0" />
        </linearGradient>
        <radialGradient id="glow" gradientUnits="userSpaceOnUse" cx="0" cy="0" r="1" gradientTransform="translate(1120 320) scale(340 210)">
          <stop offset="0" stopColor="#d8dce8" /><stop offset=".5" stopColor="#dadee9" stopOpacity=".75" /><stop offset="1" stopColor="#e4e7ef" stopOpacity="0" />
        </radialGradient>
        <filter id="soft" x="-20%" y="-20%" width="140%" height="140%"><feGaussianBlur stdDeviation="9" /></filter>
      </defs>
      <rect x="300" y="164" width="1020" height="543" fill="url(#sky)" />
      <rect x="300" y="164" width="1020" height="543" fill="url(#veil)" />
      <rect x="300" y="164" width="1020" height="543" fill="url(#glow)" />
      <path d="M656 334L859 258L1151 613L948 690z" fill="#b0b3cc" fillOpacity=".18" stroke="#2b4384" strokeWidth="1" />
      <path
        d="M648 306L822 239L1092 545L906 619Q780 480 650 322zM770 418L868 362Q890 354 902 370L934 415Q948 450 930 500L856 512Q820 480 770 418z"
        fill="#303136" fillRule="evenodd" fillOpacity=".95" filter="url(#soft)"
      />
      <path d="M640 301Q797 426 920 585L1105 516V520L920 589Q790 431 639 305z" fill="#078a5b" stroke="#111" strokeWidth="1.2" />
      <path d={`M640 301L825 231Q982 357 1105 516L920 585Q797 426 640 301z${HOLE}`} fill="#02b27c" fillRule="evenodd" stroke="#0c1a14" strokeWidth="1.2" />
      <path d="M772 371C772 368 775 366 781 364L869 331C883 326 898 330 908 340L958 388C969 400 977 412 977 430L974 444C977 424 969 405 955 390L906 343C898 335 884 331 872 334L784 367Q776 369 773 373z" fill="#078a5b" stroke="#0c1a14" strokeWidth="1.1" />
      <path d="M869 331V335M908 340L906 343M958 388L955 391" stroke="#0c1a14" strokeWidth="1" />
      <text x="812" y="292" transform="rotate(-20 812 292)" fontFamily="DejaVu Sans, sans-serif" fontSize="19" fill="#02b27c" stroke="#3f7f96" strokeWidth=".8">Plan2</text>
      <g strokeWidth="4">
        <path d="M341 655L328 639" stroke="#b01818" /><path d="M323 633L334 638L327 645z" fill="#8a1616" />
        <path d="M341 655L358 649" stroke="#15159a" /><path d="M367 646L355 643L358 653z" fill="#15157e" />
        <path d="M341 656L347 643" stroke="#125912" /><path d="M351 635L342 643L351 647z" fill="#1c6a1c" />
      </g>
      <g fontFamily="Liberation Sans, sans-serif" fontSize="11">
        <text x="318" y="634" fill="#e01010">X</text><text x="348" y="636" fill="#108a10">Y</text><text x="361" y="649" fill="#1010e0">Z</text>
      </g>
    </svg>
  );
}

function Viewport() {
  const pane = [
    <Svg><circle cx="10" cy="10" r="9.3" fill="#245f86" stroke="#173e58" /><circle cx="10" cy="10" r="3.5" fill="#1a4767" /><path d="M9 8L12.5 10L9 12z" fill="#cfe4f0" /><path d="M10 3V5M10 15V17M3 10H5M15 10H17" stroke="#a9c9da" strokeWidth="1.6" /></Svg>,
    <Home />,
    <Svg><path d="M2 6L6 2L10 3V17L6 18.5L2 17zM6 5L10 3L14 4M6 5V18M10 6L14 4L18 5V15L13 18.5L6 18M10 6V18M14 7V18M14 7L18 5" fill="#f4f4f4" stroke={INK} /></Svg>,
    <Svg><path d="M1 17V4H6L8 6H17V9" fill="#bbb" stroke={INK} /><path d="M1 17.5L6 8.5H19.5L14.5 17.5z" fill="#f8f8f8" stroke={INK} /></Svg>,
    <Svg><rect x="1.5" y="2" width="17" height="16" fill="#fff" stroke={INK} /><path d="M4 4.5H12V8H4zM14 4.5H16.5V7H14zM7 10H10V13H13V16H4V13H7z" fill="#f6c51f" stroke="#333" strokeWidth=".8" /><path d="M15 10H18V18H15z" fill="#777" /></Svg>,
    <Ball cx={10} cy={10} />,
    <PropI />,
    <Svg><path d="M1 2H13V10H6L3.5 13V10H1z" fill="#4a9fc6" stroke="#1f4457" /><path d="M9 7H19V14H17.5V18L14 14H9z" fill="#f2f2f2" stroke={INK} /></Svg>,
  ];
  return (
    <main className="relative min-w-0 flex-1 overflow-hidden border-l border-[#7f7f7f] bg-white">
      <div className="absolute inset-0"><Scene /></div>
      <div className="absolute inset-x-0 top-[7px] flex justify-center pr-1">
        <Tool label="Zoom au mieux" cls="w-9"><ZoomFit /></Tool>
        <Tool label="Zoom fenêtre" cls="w-9"><ZoomArea /></Tool>
        <Tool label="Vue précédente" cls="w-9"><Prev /></Tool>
        <Tool label="Vue en coupe" cls="w-9"><Section /></Tool>
        <Tool label="Orientation" cls="w-9" caret off cc="w-3.5"><ViewCube /></Tool>
        <Tool label="Style d'affichage" cls="w-9" caret off cc="w-3.5"><Display /></Tool>
        <Tool label="Cacher" cls="w-9" caret off cc="w-3.5"><Eye /></Tool>
        <Tool label="Apparence" cls="w-9"><Ball><Pencil /></Ball></Tool>
        <Tool label="Scène" cls="w-9" caret off cc="w-3.5"><Svg><Checker /><svg x="1" y="-1" width="18" height="18" viewBox="0 0 20 20"><Ball cx={10} cy={10} /></svg></Svg></Tool>
        <Tool label="Affichage" cls="w-9" caret off cc="w-3.5"><Monitor /></Tool>
      </div>
      <div className="absolute top-2 right-3 flex items-center gap-[11px]">
        {[
          <path d="M4 3.5H15.5V16.5H4zM7 6V14" stroke="#9a9a9a" strokeWidth="1.3" key="a" />,
          <path d="M4 3.5H15.5V16.5H4zM12.5 6V14" stroke="#9a9a9a" strokeWidth="1.3" key="b" />,
          <path d="M5 15.5H15" stroke="#8c8c8c" strokeWidth="2" key="c" />,
          <path d="M7.5 7V3.5H17.5V10.5H13.5M3 8.5H13V15.5H3z" stroke="#8c8c8c" strokeWidth="1.3" key="d" />,
          <path d="M5 5L15 15M15 5L5 15" stroke="#8c8c8c" strokeWidth="1.5" key="e" />,
        ].map((p, i) => <button key={i} aria-label={`Fenêtre ${i + 1}`}><Svg>{p}{i < 2 && <path d={i ? "M9 7L12.5 10L9 13z" : "M10.5 7L7 10L10.5 13z"} fill="#8c8c8c" />}</Svg></button>)}
      </div>
      <div className="absolute top-[51px] right-0 flex w-[26px] flex-col border-t border-l border-[#7f7f7f]">
        {pane.map((p, i) => (
          <button key={i} aria-label={`Volet ${i + 1}`} className={`flex h-6 items-center justify-center border-b border-[#7f7f7f] ${i ? "bg-[#d4d4d4]" : "bg-[#f6f6f6]"}`}>{p}</button>
        ))}
      </div>
      <div className="absolute top-[253px] left-0 flex h-[39px] w-2 items-center border border-l-0 border-[#7f7f7f] bg-[#f6f6f6]">
        <span className="h-1.5 w-1.5 rounded-full border border-[#999] bg-[#ddd]" />
      </div>
    </main>
  );
}

function RenderBar() {
  const small = <><rect x="11" y="11" width="8" height="8" fill="#eee" stroke={PALE} /><circle cx="15" cy="15.5" r="2" stroke={PALE} /></>;
  const icons = [
    <Ball><Pencil /></Ball>,
    <Ghost cx={8} cy={6} r={5}><circle cx="13.5" cy="10.5" r="5" fill="#dedede" stroke="#c2c2c2" /><path d="M1.5 12L7 17M7.5 12V17.5H2" stroke={PALE} strokeWidth="2" /></Ghost>,
    <Svg><rect x="1.5" y="3" width="12" height="14" rx="1" fill="#eee" stroke={PALE} /><path d="M5 1.5H10V4.5H5z" fill="#ddd" stroke={PALE} /><circle cx="13.5" cy="13" r="5.5" fill="#dadada" stroke="#c2c2c2" /></Svg>,
    <Svg><path d="M1 12H19V18H1z" fill="#222" /><path d="M2 15H4V17H2zM16 13H18V15H16z" fill="#fff" /><Ball cx={10} cy={8} r={7.5} /><Pencil /></Svg>,
    <Svg><path d="M2 4V15Q8 19 14 15V4" fill="#f2f2f2" stroke={INK} /><ellipse cx="8" cy="4" rx="6" ry="2.2" fill="#fff" stroke={INK} /><path d="M5 10H11V14H5z" fill="#a8d3e6" /><Pencil /></Svg>,
    <Svg><circle cx="10" cy="10" r="6.5" stroke="#2d5f7d" /><circle cx="10" cy="10" r="3" stroke="#2d5f7d" /><path d="M10 1V19M1 10H19" stroke="#2d5f7d" strokeWidth="1.2" /></Svg>,
    <Svg><path d="M1.5 1.5H18.5V18.5H1.5zM1.5 5H18.5" stroke={PALE} strokeWidth="1.3" /><circle cx="10" cy="11.5" r="4.7" fill="#d4d4d4" stroke="#bbb" /></Svg>,
    <Ghost>{small}</Ghost>,
    <Ghost cx={10} cy={10} />,
    <Ghost cx={10} cy={10} r={7}><path d="M1 3H19V11H1z" stroke="#aaa" strokeDasharray="2 1.5" /></Ghost>,
    <Svg>{[[5.5, 5.5], [14.5, 5.5], [5.5, 14.5], [14.5, 14.5]].map(([x, y]) => <circle key={`${x}-${y}`} cx={x} cy={y} r="4" fill={y < 10 ? "#d4d4d4" : "#f2f2f2"} stroke="#bdbdbd" />)}</Svg>,
    <Ghost cx={8} cy={8} r={6.5}><circle cx="15" cy="15" r="3" stroke="#aaa" strokeWidth="2.4" strokeDasharray="2 .6" /></Ghost>,
    <Ghost cx={8} cy={8} r={6.5}><circle cx="14.5" cy="14" r="4.5" fill="#f3f3f3" stroke="#bbb" /><path d="M14.5 11V14H17" stroke="#aaa" /></Ghost>,
    <Ghost cx={12.5} cy={7.5} r={6.5}><rect x="1.5" y="9" width="8" height="9" fill="#eee" stroke={PALE} /><circle cx="5.5" cy="14" r="2" stroke="#aaa" /><path d="M18 11V15H11M13.5 12L10.5 15L13.5 18" stroke="#b5b5b5" strokeWidth="2" /></Ghost>,
  ];
  return (
    <aside className="flex w-[33px] shrink-0 flex-col items-end bg-[#f6f6f6] pt-[3px]">
      <div className="mb-2 w-7 border-t-2 border-dotted border-[#aaa]" />
      {icons.map((ic, i) => <button key={i} aria-label={`Rendu ${i + 1}`} className="flex h-[26px] w-[31px] items-center justify-center">{ic}</button>)}
      <div className="mt-[7px] h-px w-[31px] bg-[#7f7f7f]" />
    </aside>
  );
}

function StatusBar() {
  return (
    <footer className="flex h-[19px] shrink-0 items-center border-t border-[#7f7f7f] bg-[#f6f6f6]">
      <span className="flex-1 pl-px">SOLIDWORKS Edition étudiante - Utilisation universitaire uniquement</span>
      <span className="w-[98px]">Edition: Pièce</span>
      <span className="w-[110px]"><Svg s={16}><path d="M1 12L7 2L13 12z" fill="#f6c51f" stroke="#8a5a06" /><path d="M7 5.5V9M7 10V11.5" stroke="#222" strokeWidth="1.5" /><path d="M9 12Q16 12 15.5 4M12 6L15.5 2.5L19 6" stroke="#222" strokeWidth="2" /><path d="M1 17H5M6 17H10M11 16H15M16 16H19" stroke="#246a92" strokeWidth="3" /></Svg></span>
      <span className="w-[72px]">MMGS</span>
      <svg width="5" height="3" viewBox="0 0 5 3"><path d="M0 3L2.5 0L5 3z" fill="#333" /></svg>
      <span className="ml-[27px] w-6"><Svg s={16}><path d="M1 5L10 2L19 10V14L11 18L2 10z" fill="#e8e8e8" stroke="#444" strokeWidth="1.3" /><circle cx="8" cy="7.500" r="2.5" stroke="#444" /><path d="M1 5L11 14L19 10M11 14V18" stroke="#444" /></Svg></span>
      <svg width="10" height="10" viewBox="0 0 10 10" className="mr-1 self-end"><path d="M7 0H9V2H7zM4 3H6V5H4zM7 3H9V5H7zM1 6H3V8H1zM4 6H6V8H4zM7 6H9V8H7z" fill="#bbb" /></svg>
    </footer>
  );
}

/* ---------- taskbar ---------- */
const Badge = ({ l, fill }: { l: string; fill: string }) => (
  <><rect x="0" y="5.500" width="13" height="13" rx="1" fill={fill} /><text x="6.500" y="16" textAnchor="middle" fontFamily="Open Sans, sans-serif" fontSize="11" fontWeight="700" fill="#fff">{l}</text></>
);
const Office = ({ l, a, b, c, d }: { l: string; a: string; b: string; c: string; d: string }) => (
  <Svg s={24} v="0 0 24 24">
    <rect x="6" y="1.5" width="18" height="21" rx="1.5" fill={b} /><path d="M6 3Q6 1.5 7.5 1.5H22.5Q24 1.5 24 3V7H6z" fill={a} /><path d="M6 12.5H24V17.5H6z" fill={c} /><path d="M6 17.5H24V21Q24 22.5 22.5 22.5H7.5Q6 22.5 6 21z" fill={d} />
    <Badge l={l} fill={c} />
  </Svg>
);

function Taskbar() {
  const apps: { n: string; i: ReactNode; u?: boolean; hot?: boolean }[] = [
    { n: "OneNote", i: <Svg s={24} v="0 0 24 24"><path d="M6 1.5H24V22.5H6z" fill="#ca64ea" /><path d="M18 7H24V14H18z" fill="#ae4bd5" /><path d="M18 14H24V22.5H18z" fill="#7719aa" /><Badge l="N" fill="#7719aa" /></Svg> },
    { n: "PowerPoint", i: <Svg s={24} v="0 0 24 24"><circle cx="13.5" cy="12" r="10.5" fill="#ed6c47" /><path d="M13.5 1.5A10.5 10.5 0 0 1 24 12H13.5z" fill="#ff8f6b" /><path d="M3 12H24A10.5 10.5 0 0 1 3 12z" fill="#d35230" /><Badge l="P" fill="#c43e1c" /></Svg> },
    { n: "Word", i: <Office l="W" a="#41a5ee" b="#2b7cd3" c="#185abd" d="#103f91" /> },
    { n: "Edge", u: true, i: <Svg s={24} v="0 0 24 24"><circle cx="12" cy="12" r="11.5" fill="#1680cf" /><path d="M1 10Q3 0 13 .6Q23 2 23.5 11Q23 15.5 17 15Q14 14.5 15 12Q15 7 9.5 6.5Q4 6.5 1 10z" fill="#35c1cf" /><path d="M16 1.5Q23.5 4 23.5 11Q23 15.5 17 15Q14 14.5 15 12Q18 7 13 1z" fill="#6adb62" /><path d="M9 10Q5 18 13 20.5Q18 21.5 22 18Q18 24 10 23Q5 18 9 10z" fill="#0c4fa0" /></Svg> },
    { n: "Excel", i: <Office l="X" a="#33c481" b="#21a366" c="#107c41" d="#185c37" /> },
    { n: "Firefox", i: <Svg s={24} v="0 0 24 24"><path d="M1 9Q2 5 4 4L5 7L8 5L9 8Q12 7 13 4Q14 1 16 .5Q16 4 19 6L20 4Q23 8 23 13Q22 23 12 23.5Q1 22 1 9z" fill="#ff7a2e" /><path d="M14 6Q14 1 16 .5Q16 4 19 6L20 4Q24 10 22 15L17 16z" fill="#ffd83b" /><circle cx="12" cy="12.5" r="5" fill="#8d4fc9" /><path d="M2 12Q4 19 11 18Q17 18 18 13Q22 21 12 23.5Q3 22 2 12z" fill="#ff4a5c" /></Svg> },
    { n: "Inkscape", i: <Svg s={24} v="0 0 24 24"><path d="M0 0H24V24H0z" fill="#e81123" /><path d="M12 5.500L18 11.5Q19 13.500 15 14L16 15.500L13 18.500L10 17.500L11 15.500L6.500 14Q5 13 6 11.5z" fill="#1a1a1a" /><path d="M12 5.500L15.500 9L13 9.5L11 8.8L8.8 9z" fill="#ddd" /></Svg> },
    { n: "Opera", i: <Svg s={24} v="0 0 24 24"><ellipse cx="12" cy="12" rx="11.500" ry="11.500" fill="#c9141c" /><path d="M12 .500A11.500 11.500 0 0 1 12 23.500Q18 20 18 12T12 .500z" fill="#ff5a5c" /><ellipse cx="12" cy="12" rx="5.500" ry="9" fill="#302824" /></Svg> },
    { n: "SolidWorks", u: true, hot: true, i: <Svg s={26} v="0 0 24 24"><path d="M1 4L12 1L23 4V16L12 19L1 16z" fill="#c8141b" stroke="#5c0508" /><path d="M12 7L23 4V16L12 19z" fill="#7e0b10" /><text x="2" y="15" fontFamily="Open Sans" fontSize="12" fontWeight="800" fill="#fff">S</text><text x="11" y="15" fontFamily="Open Sans" fontSize="11" fontWeight="800" fill="#fff">W</text><text x="4" y="23.5" fontFamily="Open Sans" fontSize="8" fontWeight="800" fill="#fff" stroke="#111" strokeWidth="1.5" paintOrder="stroke">2020</text></Svg> },
  ];
  return (
    <div className="relative flex h-10 shrink-0 items-stretch bg-linear-to-r from-[#3a2d24] via-[#302a26] to-[#35291f] text-white">
      <button aria-label="Démarrer" className="flex w-12 items-center justify-center"><Svg s={16}><path d="M0 2.8L8.5 1.6V9.5H0zM9.7 1.4L20 0V9.5H9.7zM0 10.7H8.5V18.5L0 17.3zM9.7 10.7H20V20L9.7 18.6z" fill="#fff" /></Svg></button>
      <button aria-label="Applications ouvertes" className="flex w-12 items-center justify-center"><Svg s={18}><path d="M2 2V5H13V2M2 18V15H13V18M1.5 7H13.5V13H1.5zM17 2V6M17 13V18" stroke="#fff" strokeWidth="1.5" /><path d="M15.5 8H18.5V11H15.5z" fill="#fff" /></Svg></button>
      <span className="flex w-[17px] items-center justify-center gap-0.5"><i className="h-4 w-px bg-[#6a625c]" /><i className="h-4 w-px bg-[#6a625c]" /></span>
      <button aria-label="Dossiers" className="mr-[5px] ml-2.5 flex w-10 items-center justify-center border-b-2 border-[#f79a9e]"><Svg s={20}><path d="M3 1H15V14L17 15V19H3z" fill="#f5cf68" /><path d="M3 1L8 4V20L3 18z" fill="#fce9a9" /></Svg></button>
      {apps.map((a) => (
        <button key={a.n} aria-label={a.n} className={`flex w-[49px] items-center justify-center ${a.hot ? "border-b-2 border-[#f79a9e] bg-[#5b514d]" : a.u ? "px-1" : ""}`}>
          {a.u && !a.hot ? <span className="flex h-10 w-10 items-center justify-center border-b-2 border-[#f79a9e]">{a.i}</span> : a.i}
        </button>
      ))}
      <div className="ml-auto flex items-stretch">
        <button aria-label="Assistance" className="flex w-[34px] items-center justify-center"><Svg s={24} v="0 0 24 24"><circle cx="11" cy="12" r="10" fill="#1592cf" stroke="#fff" strokeWidth="1.5" /><path d="M7 9Q7.5 5.5 11 5.5T15 9Q15 11 12.5 12Q11 13 11 14.5M11 16V18.5" stroke="#fff" strokeWidth="2.2" /><circle cx="19" cy="17.5" r="5" fill="#e01b22" /><path d="M19 14.5V18M19 19V20.5" stroke="#fff" strokeWidth="1.5" /></Svg></button>
        <button aria-label="Afficher les icônes cachées" className="flex w-6 items-center justify-center bg-[#494847]"><Svg s={12}><path d="M3 13L10 6L17 13" stroke="#fff" strokeWidth="2" /></Svg></button>
        <div className="flex w-[97px] items-center justify-between px-2">
          <Svg s={16}><path d="M1 15Q3 5 14 3M5 16Q6 9 14 8" stroke="#fff" strokeWidth="1.5" /></Svg>
          <Svg s={16}><path d="M1 14Q0 9 5 9Q8 3 13 7Q19 8 19 14z" fill="#999" /></Svg>
          <Svg s={16}><path d="M1 7H5L10 2V18L5 13H1zM13 5L18 10M18 5L13 10" stroke="#fff" strokeWidth="1.4" /></Svg>
          <Svg s={14}><path d="M1 3H19V15H1zM5 7H15" stroke="#fff" strokeWidth="1.6" /></Svg>
        </div>
        <div className="flex w-[66px] flex-col items-center justify-between pt-[3px] pb-[3px] text-[12px] leading-4"><time>11:50</time><time>09/12/2021</time></div>
        <button aria-label="10 notifications" className="flex w-[51px] items-center pl-3">
          <Svg s={30} v="0 0 30 30"><path d="M3 5H19V17H11L7 21V17H3z" fill="#fff" /><path d="M5.5 8.5H16.5M5.5 11.5H16.5" stroke="#332b26" /><circle cx="18" cy="20" r="8.5" fill="#38312d" stroke="#8d8782" /><text x="18" y="24" textAnchor="middle" fontSize="11" fill="#fff" fontFamily="Open Sans">10</text></Svg>
        </button>
        <div className="w-1 border-l border-[#6a625c]" />
      </div>
      <div role="tooltip" className="absolute right-[84px] bottom-px flex h-5 items-center border border-[#777] bg-white px-1.5 whitespace-nowrap text-[#555]">Afficher les icônes cachées</div>
    </div>
  );
}

export default function App() {
  return (
    <div className="flex min-h-screen flex-col bg-[#efefef] font-['Noto_Sans','Open_Sans',sans-serif] text-[11px] text-black">
      <div className="flex h-1.5 items-end gap-11 pl-0.5">
        <i className="h-[3px] w-3 bg-[#e3c558]" /><i className="h-[3px] w-3 bg-[#e3c558]" />
      </div>
      <div className="flex flex-1">
        <div className="w-0.5 shrink-0 bg-[#d0d0d0] pt-[17px]"><div className="h-[22px] bg-[#a80f22]" /></div>
        <div className="flex min-w-0 flex-1 flex-col border border-[#666] bg-white pt-[7px]">
          <div className="border-t border-[#7f7f7f]"><TitleBar /></div>
          <QuickBar />
          <Ribbon />
          <div className="relative flex flex-1 items-stretch">
            <Tabs />
            <SideKeys />
            <div className="w-px bg-[#f6f6f6]" />
            <Tree />
            <Viewport />
            <RenderBar />
          </div>
          <StatusBar />
        </div>
        <div className="flex w-3 shrink-0 flex-col overflow-hidden bg-linear-to-r from-[#b5b5b5] to-[#ededed] pt-5">
          <svg width="10" height="16" viewBox="6 0 10 16" fill="none" aria-hidden="true" className="shrink-0">
            <circle cx="8" cy="8" r="8" fill="#0a63c2" /><path d="M5 6Q5.500 3.500 8 3.500T11 6Q11 7.500 9 8.500V10M9 11V13" stroke="#fff" strokeWidth="2" />
          </svg>
          <div className="mt-[256px] h-5 w-[3px] bg-[#a4161a]" />
          <div className="mt-[118px] h-5 w-[3px] bg-[#a4161a]" />
        </div>
      </div>
      <div className="h-px bg-[#ddd]" />
      <Taskbar />
    </div>
  );
}
